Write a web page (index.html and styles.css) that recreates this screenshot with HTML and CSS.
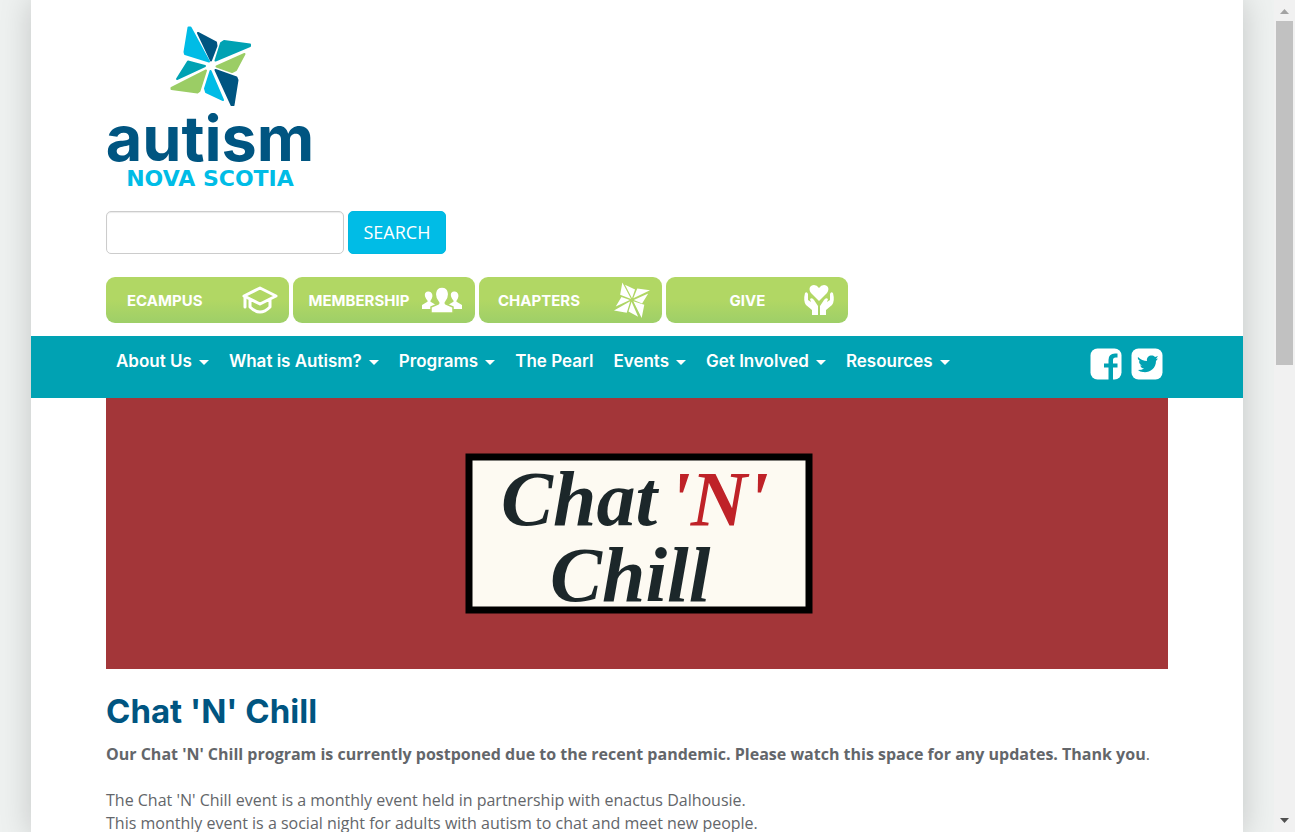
FILE: index.html
```html
<!DOCTYPE html>
<html lang="en">
<head>
<meta charset="utf-8">
<title>Chat 'N' Chill - Autism Nova Scotia</title>
<link rel="stylesheet" href="styles.css">
</head>
<body>
<div class="viewport">
<div class="backdrop">
<div class="page">
  <header class="header">
    <a class="logo" href="#" aria-label="Autism Nova Scotia">
      <svg width="210" height="170" viewBox="105 20 210 170">
        <g stroke-width="2" stroke-linejoin="round">
          <g fill="#00bce6" stroke="#00bce6"><path d="M188.500 27.500 190.500 27.500 209 61.500 185 54 184.500 52Z"/><path d="M210.500 71 205 88.500 206 92 223 100Z"/></g>
          <g fill="#005581" stroke="#005581"><path d="M198 33 216 42.500 216.500 46 211 60.500Z"/><path d="M215.500 70 236.500 77.500 237.500 80 233.500 105 231.500 105Z"/></g>
          <g fill="#00a2b3" stroke="#00a2b3"><path d="M224 41 250 44.500 250 46 215.500 60.500 221 43Z"/><path d="M188 61.500 177 79 205 66Z"/></g>
          <g fill="#9bcd65" stroke="#9bcd65"><path d="M244.500 54 236 70 232 72 216.500 66.500Z"/><path d="M171.500 88 206 70.500 199.500 91 197.500 92.500 171.500 89Z"/></g>
        </g>
        <text class="logo-name" x="210" y="161" text-anchor="middle">autism</text>
        <text class="logo-region" x="210" y="186" text-anchor="middle">NOVA SCOTIA</text>
      </svg>
    </a>
    <form class="search">
      <input class="search-box" type="text" aria-label="Search">
      <button class="search-button" type="button">SEARCH</button>
    </form>
    <div class="actions">
      <a class="action action-ecampus" href="#">ECAMPUS
        <svg width="36" height="28" viewBox="0 0 36 28" fill="none" stroke="#fff" stroke-width="3" stroke-linejoin="round" stroke-linecap="round"><path d="M2 10 18 2 34 10 18 18ZM8 14V21Q18 31 28 21V14"/><path d="M3 11V21"/></svg>
      </a>
      <a class="action action-membership" href="#">MEMBERSHIP
        <svg width="42" height="26" viewBox="0 0 42 26" fill="#fff"><path id="person" d="M1 22V18L6 15C7 14.500 7 14 6 13C3 9 3 5 7 4.500C11 4 13 9 10 13C9 14 9 14.500 10 15L15 18V22Z"/><use href="#person" x="26"/><path stroke="#b0d665" stroke-width="1.500" d="M10 26V20L17 17C18 16.500 18 15.500 17 14.500C13 10 13 0 21 0S29 10 25 14.500C24 15.500 24 16.500 25 17L32 20V26Z"/></svg>
      </a>
      <a class="action action-chapters" href="#">CHAPTERS
        <svg width="38" height="36" viewBox="170 25 82 82" fill="#fff"><path d="M189 26 184 54 209 64ZM195 31 218 42 211 62ZM223 40 252 44 214 62ZM248 51 234 74 215 66ZM214 69 239 77 233 107ZM210 70 203 92 225 104ZM187 59 174 81 206 66ZM170 90 207 69 199 95Z"/></svg>
      </a>
      <a class="action action-give" href="#">GIVE
        <svg width="32" height="32" viewBox="0 0 32 32"><path fill="#fff" d="M16 17 8 9C5 5 7 1 11 1Q14 1 16 4Q18 1 21 1C25 1 27 5 24 9Z"/><path fill="#fff" d="M2 9Q4 7 5 10V16L8 18L7 15Q9 13 11 16L15 22V31H9V26L3 21Q0 17 2 9ZM30 9Q28 7 27 10V16L24 18L25 15Q23 13 21 16L17 22V31H23V26L29 21Q32 17 30 9Z"/></svg>
      </a>
    </div>
  </header>
  <nav class="nav">
    <div class="menu">
      <a class="menu-item has-caret" href="#">About Us</a>
      <a class="menu-item has-caret" href="#">What is Autism?</a>
      <a class="menu-item has-caret" href="#">Programs</a>
      <a class="menu-item" href="#">The Pearl</a>
      <a class="menu-item has-caret" href="#">Events</a>
      <a class="menu-item has-caret" href="#">Get Involved</a>
      <a class="menu-item has-caret" href="#">Resources</a>
    </div>
    <div class="social">
      <a href="#" aria-label="Facebook"><svg width="32" height="32" viewBox="0 0 32 32"><rect x=".5" y=".5" width="31" height="31" rx="7" fill="#fff"/><path fill="#00a2b3" d="M18.500 32V19.500H14V15.500H18.500V12Q18.500 5.500 25 5.500H27.500V9.500H25.500Q23 9.500 23 12V15.500H27.500V19.500H23V32Z"/></svg></a>
      <a href="#" aria-label="Twitter"><svg width="32" height="32" viewBox="0 0 32 32"><rect x=".5" y=".5" width="31" height="31" rx="7" fill="#fff"/><path fill="#00a2b3" d="M7 9Q11 13 16 13C15 8 21 6 24 9L27 8 25 11 27 10.500 25 13C25 21 18 25 12 24Q9 24 7 22Q11 22 13 20.500Q10 20 9 17.500H11Q8 16 8 13L9.500 13.500Q6 11 7 9Z"/></svg></a>
    </div>
  </nav>
  <main class="content">
    <svg class="banner" viewBox="0 0 1062 271" role="img" aria-label="Chat 'N' Chill">
      <rect width="1062" height="271" fill="#a33639"/>
      <rect x="363" y="59" width="340" height="153" fill="#fdfaf2" stroke="#000" stroke-width="7"/>
      <text class="banner-text" x="395" y="127">Chat</text>
      <text class="banner-text banner-red" x="563" y="127">'N'</text>
      <text class="banner-text" x="444" y="203">Chill</text>
    </svg>
    <h1 class="title">Chat 'N' Chill</h1>
    <p class="text"><strong>Our Chat 'N' Chill program is currently postponed due to the recent pandemic. Please watch this space for any updates. Thank you</strong>.</p>
    <p class="text">The Chat 'N' Chill event is a monthly event held in partnership with enactus Dalhousie.<br>This monthly event is a social night for adults with autism to chat and meet new people.</p>
  </main>
</div>
</div>
<div class="scrollbar" aria-hidden="true">
  <svg class="arrow" width="17" height="21" viewBox="0 0 17 21"><path fill="#a3a3a3" d="M8.500 9 13 14H4Z"/></svg>
  <div class="thumb"></div>
  <svg class="arrow arrow-down" width="17" height="21" viewBox="0 0 17 21"><path fill="#505050" d="M8.500 12 13 7H4Z"/></svg>
</div>
</div>
</body>
</html>
```
FILE: styles.css
```css
* { box-sizing: border-box; }
body { margin: 0; font-family: "Open Sans", sans-serif; font-size: 16px; line-height: 23px; color: #63666a; background: #eef1f0; }
a { color: #fff; text-decoration: none; }
svg { display: block; flex: none; }
.viewport { display: flex; height: 100vh; }
.backdrop { flex: 1; overflow: hidden; padding: 0 31px; }
.page { min-height: 100%; background: #fff; box-shadow: 0 0 30px rgba(0, 0, 0, 0.18); }
.header { padding: 20px 75px 13px; }
.logo { display: inline-block; vertical-align: top; margin-left: -1px; }
.logo-name { font: bold 63px Inter, sans-serif; fill: #005581; }
.logo-region { font: bold 22px "DejaVu Sans", sans-serif; fill: #00bce6; }
.search { display: flex; gap: 4px; margin-top: 21px; }
.search-box { width: 238px; height: 43px; padding: 6px 12px; border: 1px solid #ccc; border-radius: 5px; box-shadow: inset 0 1px 1px rgba(0, 0, 0, 0.08); font: inherit; }
.search-button { width: 98px; height: 43px; padding: 0 0 2px; border: 1px solid #00b8e1; border-radius: 5px; background: #00bce6; color: #fff; font: 18px "Open Sans", sans-serif; }
.actions { display: grid; grid-template-columns: repeat(4, 1fr); gap: 4px; max-width: 742px; margin-top: 23px; }
.action { display: flex; align-items: center; justify-content: space-between; height: 46px; border-radius: 9px; background: linear-gradient(#b1d764 50%, #9ecf68); font: bold 15px Inter, sans-serif; }
.action-ecampus { padding: 0 11px 0 21px; }
.action-membership { padding: 0 12px 0 16px; }
.action-chapters { padding: 0 11px 0 19px; }
.action-give { padding: 0 13px 0 64px; }
.nav { display: flex; justify-content: space-between; height: 62px; padding: 0 80px 0 75px; background: #00a2b3; }
.menu { display: flex; }
.menu-item { display: flex; align-items: center; height: 49px; padding: 0 10px; font: 600 17px Inter, sans-serif; }
.has-caret::after { content: ""; margin: 3px 0 0 7px; border: 5px solid transparent; border-top-color: #fff; border-bottom: 0; }
.social { display: flex; gap: 9px; padding-top: 12px; }
.content { padding: 0 75px; }
.banner { width: 100%; height: auto; }
.banner-text { font: italic bold 78px "Liberation Serif", serif; fill: #1c272a; }
.banner-red { fill: #bf2228; }
.title { margin: 22px 0 12px; font: bold 33px/40px Inter, sans-serif; color: #005581; }
.text { margin: 0 0 23px; }
.scrollbar { display: flex; flex-direction: column; width: 21px; padding: 0 2px; background: #f1f1f1; }
.thumb { height: 344px; background: #c1c1c1; }
.arrow-down { margin-top: auto; }
```
